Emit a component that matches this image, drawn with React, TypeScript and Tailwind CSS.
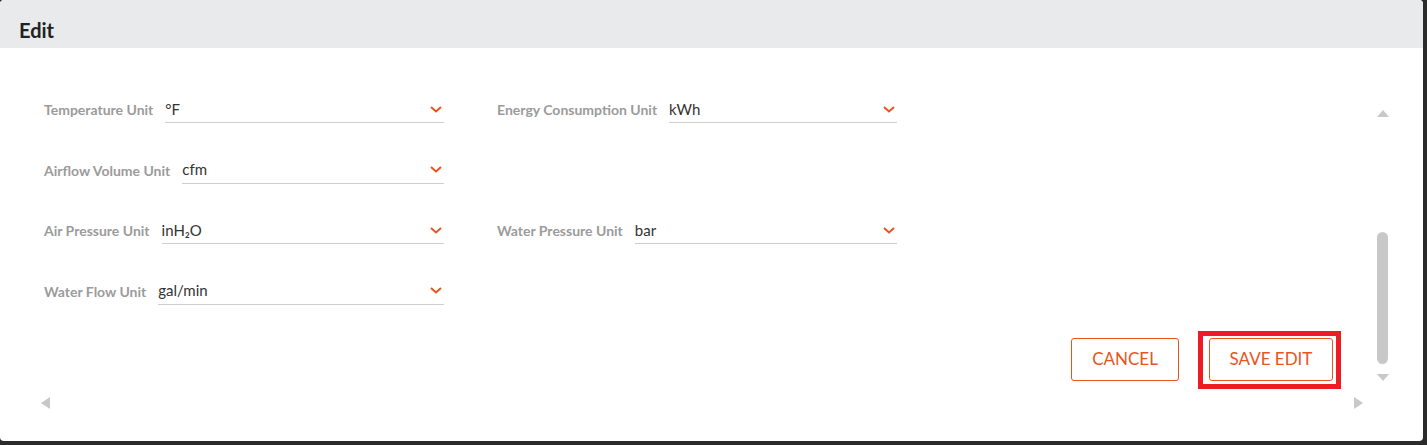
import React from "react";

const Chevron = () => (
  <svg width="12" height="7" viewBox="0 0 12 7" className="shrink-0">
    <path d="M1 1 L6 5.5 L11 1" fill="none" stroke="#e8541e" strokeWidth="2" />
  </svg>
);

const Field = ({ label, value }: { label: string; value: React.ReactNode }) => (
  <div className="flex items-center gap-[12px]">
    <span className="whitespace-nowrap text-[14px] font-bold text-[#9b9b9b]">{label}</span>
    <div className="flex h-[27px] flex-1 items-center justify-between border-b border-[#cfcfcf] pr-[2px]">
      <span className="text-[15px] text-[#333333]">{value}</span>
      <Chevron />
    </div>
  </div>
);

export default function App() {
  return (
    <div className="h-[445px] w-[1427px] bg-[#2b2b2b] font-[Lato,'Liberation_Sans',sans-serif]">
      <div className="flex h-[441px] w-[1423px] flex-col overflow-hidden rounded-[4px] bg-white">
        <div className="h-[48px] shrink-0 bg-[#e9eaec] pl-[19px] pt-[18px]">
          <h1 className="text-[20px] font-bold leading-[24px] text-[#222222]">Edit</h1>
        </div>
        <div className="flex flex-1 flex-col">
          <div className="flex flex-1">
            <div className="flex flex-1 flex-col pl-[44px] pt-[48px] pr-[43px]">
              <div className="grid grid-cols-[400px_400px] gap-x-[53px] gap-y-[33.5px]">
                <Field label="Temperature Unit" value="°F" />
                <Field label="Energy Consumption Unit" value="kWh" />
                <Field label="Airflow Volume Unit" value="cfm" />
                <div />
                <Field label="Air Pressure Unit" value="inH₂O" />
                <Field label="Water Pressure Unit" value="bar" />
                <Field label="Water Flow Unit" value="gal/min" />
                <div />
              </div>
              <div className="mt-[33px] flex justify-end gap-[30px]">
                <button className="h-[43px] w-[108px] rounded-[3px] border border-[#e8541e] text-[17px] text-[#e8541e]">
                  CANCEL
                </button>
                <div className="relative">
                  <button className="h-[43px] w-[124px] rounded-[3px] border border-[#e8541e] text-[17px] text-[#e8541e]">
                    SAVE EDIT
                  </button>
                  <span className="pointer-events-none absolute bottom-[-8px] left-[-11px] right-[-8px] top-[-7px] border-[5px] border-[#ed1c24]" />
                </div>
              </div>
            </div>
            <div className="mr-[34px] flex w-[13px] flex-col items-center pt-[62px]">
              <div className="h-0 w-0 border-x-[6.5px] border-b-[7px] border-x-transparent border-b-[#c8c8c8]" />
              <div className="mt-[115px] h-[132px] w-[11px] rounded-full bg-[#c8c8c8]" />
              <div className="mt-[10px] h-0 w-0 border-x-[6.5px] border-t-[7px] border-x-transparent border-t-[#c8c8c8]" />
            </div>
          </div>
          <div className="mb-[26px] flex h-[24px] items-center justify-between pl-[41px] pr-[60px]">
            <div className="h-0 w-0 border-y-[6px] border-r-[9px] border-y-transparent border-r-[#c8c8c8]" />
            <div className="h-0 w-0 border-y-[6px] border-l-[9px] border-y-transparent border-l-[#c8c8c8]" />
          </div>
        </div>
      </div>
    </div>
  );
}
